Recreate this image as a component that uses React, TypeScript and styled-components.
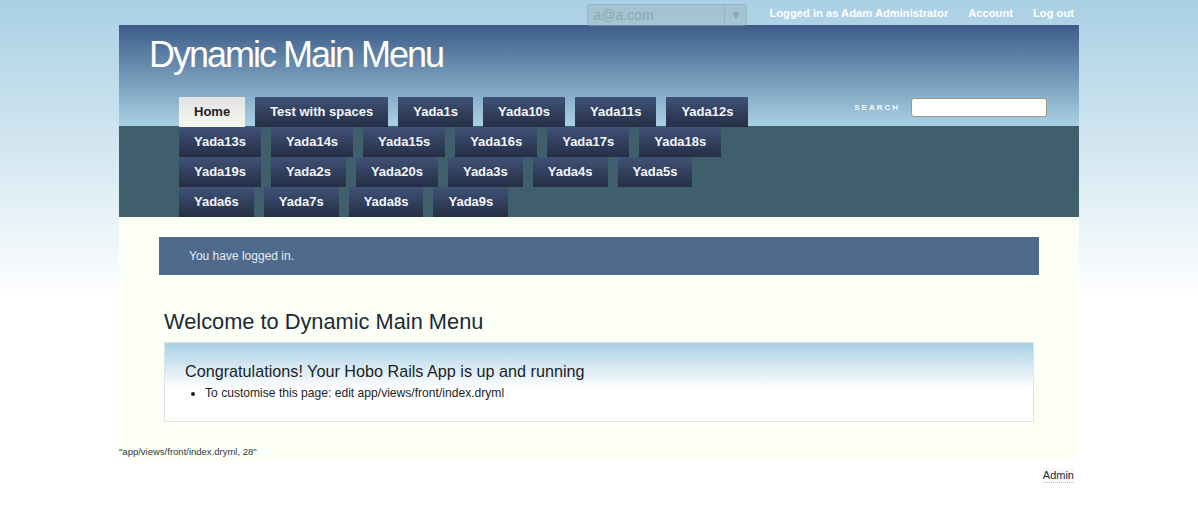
import React from "react";
import styled, { createGlobalStyle } from "styled-components";

const GlobalStyle = createGlobalStyle`
  html, body {
    margin: 0;
    padding: 0;
  }
  body {
    font-family: "Liberation Sans", Arial, sans-serif;
    background: #fff linear-gradient(to bottom, #a9d0e4 0px, #ffffff 300px) no-repeat;
    min-height: 509px;
  }
`;

const Page = styled.div`
  width: 960px;
  margin: 0 auto;
`;

const TopBar = styled.div`
  height: 25px;
  display: flex;
  justify-content: flex-end;
  align-items: center;
  gap: 20px;
  padding-right: 5px;
`;

const AccountSelect = styled.div`
  align-self: flex-start;
  margin-top: 4px;
  margin-right: 2px;
  width: 160px;
  height: 22px;
  box-sizing: border-box;
  display: flex;
  border: 1px solid rgba(130, 160, 170, 0.35);
  border-radius: 3px;
  background: rgba(150, 170, 175, 0.35);
  position: relative;
  z-index: 1;
`;

const SelectValue = styled.span`
  flex: 1;
  padding-left: 5px;
  font-size: 14px;
  line-height: 20px;
  color: #8ea7b0;
`;

const SelectArrow = styled.span`
  width: 21px;
  border-left: 1px solid rgba(130, 160, 170, 0.4);
  font-size: 11px;
  line-height: 20px;
  text-align: center;
  color: #8ea3aa;
`;

const TopLink = styled.a`
  font-size: 11.2px;
  font-weight: bold;
  color: #fff;
  text-decoration: none;
`;

const Header = styled.div`
  background: linear-gradient(to bottom, #3c5c88 0px, #a9d1e5 101px, #405f6d 101px, #405f6d 100%);
`;

const Title = styled.h1`
  margin: 0;
  padding: 8px 0 0 30px;
  font-size: 36px;
  font-weight: normal;
  line-height: 44px;
  letter-spacing: -2px;
  color: #fff;
`;

const NavArea = styled.div`
  margin-top: 20px;
  padding: 0 32px 0 60px;
  display: flex;
  justify-content: space-between;
  align-items: flex-start;
`;

const NavList = styled.ul`
  margin: 0;
  padding: 0;
  list-style: none;
  width: 585px;
  display: flex;
  flex-wrap: wrap;
  column-gap: 10px;
`;

const NavItem = styled.li<{ $current?: boolean }>`
  height: 30px;
  padding: 0 15px;
  font-size: 13px;
  font-weight: bold;
  line-height: 30px;
  white-space: nowrap;
  color: ${(p) => (p.$current ? "#222" : "#f2f5fa")};
  background: ${(p) =>
    p.$current
      ? "linear-gradient(to bottom, #e1e4e4, #f6f8ef)"
      : "linear-gradient(to bottom, #3f5276, #252e45)"};
`;

const SearchForm = styled.form`
  margin: 1px 0 0;
  display: flex;
  align-items: center;
`;

const SearchLabel = styled.label`
  font-size: 8px;
  font-weight: bold;
  letter-spacing: 2px;
  color: #f4f8fb;
  margin-right: 11px;
`;

const SearchInput = styled.input`
  width: 136px;
  height: 19px;
  box-sizing: border-box;
  border: 1px solid #a5977c;
  border-radius: 3px;
  background: #fff;
  padding: 0 4px;
`;

const Content = styled.div`
  background: #fcfff5;
  padding: 20px 0 3px;
`;

const Flash = styled.div`
  margin: 0 40px;
  height: 38px;
  padding-left: 30px;
  background: #4d6a8d;
  color: #e4ebf3;
  font-size: 12px;
  line-height: 38px;
`;

const Section = styled.div`
  padding: 0 45px;
`;

const PageTitle = styled.h2`
  margin: 34px 0 7px;
  font-size: 21.8px;
  font-weight: normal;
  line-height: 26px;
  color: #1b2a36;
`;

const Card = styled.div`
  height: 80px;
  box-sizing: border-box;
  border: 1px solid #dde4e6;
  padding: 18px 20px 0;
  background: #fff linear-gradient(to bottom, #a9d0e4 0px, #ffffff 46px) no-repeat;
`;

const CardTitle = styled.h3`
  margin: 0;
  font-size: 16.2px;
  font-weight: normal;
  line-height: 20px;
  color: #1b1e24;
`;

const CardList = styled.ul`
  margin: 4px 0 0;
  padding-left: 20px;
  font-size: 12.1px;
  line-height: 16px;
  color: #1b1e24;
`;

const SourceNote = styled.div`
  margin-top: 24px;
  font-size: 9.5px;
  line-height: 12px;
  color: #2c3a40;
`;

const FooterBar = styled.div`
  display: flex;
  justify-content: flex-end;
  padding: 7px 5px 0 0;
`;

const AdminLink = styled.a`
  font-size: 11px;
  line-height: 14px;
  color: #1e2a3a;
  text-decoration: none;
  background: #f8f8f8;
  border-bottom: 1px dotted #bbb;
`;

const menuItems = [
  "Test with spaces",
  "Yada1s",
  "Yada10s",
  "Yada11s",
  "Yada12s",
  "Yada13s",
  "Yada14s",
  "Yada15s",
  "Yada16s",
  "Yada17s",
  "Yada18s",
  "Yada19s",
  "Yada2s",
  "Yada20s",
  "Yada3s",
  "Yada4s",
  "Yada5s",
  "Yada6s",
  "Yada7s",
  "Yada8s",
  "Yada9s",
];

export default function App() {
  return (
    <>
      <GlobalStyle />
      <Page>
        <TopBar>
          <AccountSelect>
            <SelectValue>a@a.com</SelectValue>
            <SelectArrow>▼</SelectArrow>
          </AccountSelect>
          <TopLink>Logged in as Adam Administrator</TopLink>
          <TopLink>Account</TopLink>
          <TopLink>Log out</TopLink>
        </TopBar>
        <Header>
          <Title>Dynamic Main Menu</Title>
          <NavArea>
            <NavList>
              <NavItem $current>Home</NavItem>
              {menuItems.map((name) => (
                <NavItem key={name}>{name}</NavItem>
              ))}
            </NavList>
            <SearchForm onSubmit={(e) => e.preventDefault()}>
              <SearchLabel>SEARCH</SearchLabel>
              <SearchInput type="text" />
            </SearchForm>
          </NavArea>
        </Header>
        <Content>
          <Flash>You have logged in.</Flash>
          <Section>
            <PageTitle>Welcome to Dynamic Main Menu</PageTitle>
            <Card>
              <CardTitle>Congratulations! Your Hobo Rails App is up and running</CardTitle>
              <CardList>
                <li>To customise this page: edit app/views/front/index.dryml</li>
              </CardList>
            </Card>
          </Section>
          <SourceNote>"app/views/front/index.dryml, 28"</SourceNote>
        </Content>
        <FooterBar>
          <AdminLink>Admin</AdminLink>
        </FooterBar>
      </Page>
    </>
  );
}
